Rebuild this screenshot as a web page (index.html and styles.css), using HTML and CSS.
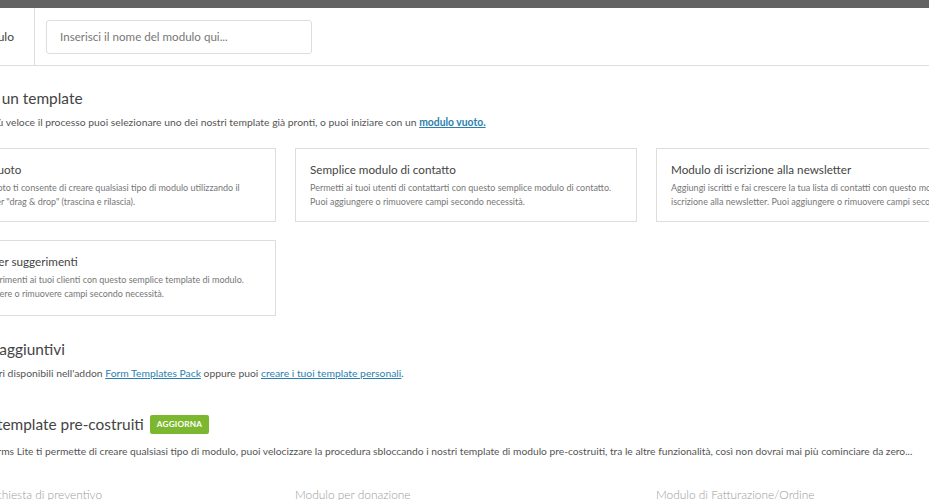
FILE: index.html
```html
<!DOCTYPE html>
<html lang="it">
<head>
<meta charset="utf-8">
<title>Setup modulo</title>
<link rel="stylesheet" href="styles.css">
</head>
<body>
<div class="topbar"></div>
<header class="header">
  <div class="header-label">Nome del modulo</div>
  <div class="header-field">
    <input class="name-input" type="text" placeholder="Inserisci il nome del modulo qui...">
  </div>
</header>
<main class="content">
  <section class="section">
    <h2 class="section-title">Seleziona un template</h2>
    <p class="section-desc">Per rendere più veloce il processo puoi selezionare uno dei nostri template già pronti, o puoi iniziare con un <a class="link-strong" href="#">modulo vuoto.</a></p>
    <div class="grid">
      <div class="card">
        <div class="card-title">Modulo vuoto</div>
        <div class="card-desc">Il modulo vuoto ti consente di creare qualsiasi tipo di modulo utilizzando il<br>nostro builder "drag &amp; drop" (trascina e rilascia).</div>
      </div>
      <div class="card">
        <div class="card-title">Semplice modulo di contatto</div>
        <div class="card-desc">Permetti ai tuoi utenti di contattarti con questo semplice modulo di contatto.<br>Puoi aggiungere o rimuovere campi secondo necessità.</div>
      </div>
      <div class="card">
        <div class="card-title">Modulo di iscrizione alla newsletter</div>
        <div class="card-desc">Aggiungi iscritti e fai crescere la tua lista di contatti con questo modulo di<br>iscrizione alla newsletter. Puoi aggiungere o rimuovere campi secondo necessità.</div>
      </div>
      <div class="card card-tall">
        <div class="card-title">Modulo per suggerimenti</div>
        <div class="card-desc">Chiedi suggerimenti ai tuoi clienti con questo semplice template di modulo.<br>Puoi aggiungere o rimuovere campi secondo necessità.</div>
      </div>
    </div>
  </section>

  <section class="section section-extra">
    <h2 class="section-title">Template aggiuntivi</h2>
    <p class="section-desc">Ne troverai altri disponibili nell'addon <a class="link" href="#">Form Templates Pack</a> oppure puoi <a class="link" href="#">creare i tuoi template personali</a>.</p>
  </section>

  <section class="section section-pro">
    <h2 class="section-title title-badge">Sblocca i template pre-costruiti <span class="badge">AGGIORNA</span></h2>
    <p class="section-desc desc-pro">Mentre WPForms Lite ti permette di creare qualsiasi tipo di modulo, puoi velocizzare la procedura sbloccando i nostri template di modulo pre-costruiti, tra le altre funzionalità, così non dovrai mai più cominciare da zero...</p>
    <div class="grid pro-grid">
      <div class="pro-item">Modulo di richiesta di preventivo</div>
      <div class="pro-item">Modulo per donazione</div>
      <div class="pro-item">Modulo di Fatturazione/Ordine</div>
    </div>
  </section>
</main>
</body>
</html>
```

FILE: styles.css
```css
html, body {
  margin: 0;
  padding: 0;
  background: #ffffff;
  overflow: hidden;
}

body {
  font-family: Lato, "Open Sans", sans-serif;
  color: #444444;
  width: 929px;
  height: 500px;
}

.topbar {
  height: 8px;
  background: #636363;
}

.header {
  display: flex;
  align-items: stretch;
  height: 57px;
  border-bottom: 1px solid #dddddd;
  margin-left: -120px;
}

.header-label {
  width: 134px;
  padding-right: 20px;
  display: flex;
  align-items: center;
  justify-content: flex-end;
  border-right: 1px solid #dddddd;
  font-size: 12px;
  color: #444444;
}

.header-field {
  display: flex;
  align-items: center;
  padding-left: 11px;
}

.name-input {
  box-sizing: border-box;
  width: 266px;
  height: 34px;
  border: 1px solid #dddddd;
  border-radius: 3px;
  padding: 0 13px;
  font-family: Lato, "Open Sans", sans-serif;
  font-size: 11.6px;
  color: #444444;
  outline: none;
}

.name-input::placeholder {
  color: #777777;
}

.content {
  margin-left: -66px;
  padding-top: 22px;
}

.section-title {
  margin: 0;
  font-size: 15.4px;
  line-height: 20px;
  font-weight: 400;
  color: #444444;
  display: flex;
  align-items: center;
  gap: 6px;
  white-space: nowrap;
}

.section-desc {
  margin: 6px 0 0;
  font-size: 10.35px;
  line-height: 16px;
  color: #555555;
  white-space: nowrap;
}

.desc-pro {
  margin-top: 9px;
  font-size: 10.25px;
}

.link-strong {
  color: #2a7fb0;
  font-weight: 700;
  text-decoration: underline;
}

.link {
  color: #2a7fb0;
  text-decoration: underline;
}

.grid {
  display: grid;
  grid-template-columns: repeat(3, 342px);
  column-gap: 19px;
  row-gap: 18px;
  margin-top: 18px;
}

.card {
  box-sizing: border-box;
  border: 1px solid #dddddd;
  background: #ffffff;
  padding: 12px 14px 11px;
  min-height: 74px;
}

.card-tall {
  min-height: 76px;
}

.card-title {
  font-size: 11.7px;
  line-height: 16px;
  color: #444444;
  white-space: nowrap;
}

.card-desc {
  margin-top: 4px;
  font-size: 9px;
  line-height: 14px;
  color: #777777;
  white-space: nowrap;
}

.section-extra {
  margin-top: 23px;
}

.section-pro {
  margin-top: 33px;
}

.badge {
  display: inline-block;
  background: #7cb82f;
  color: #ffffff;
  font-size: 8.2px;
  font-weight: 700;
  line-height: 19px;
  height: 19px;
  padding: 0 7px;
  border-radius: 2px;
  letter-spacing: 0.2px;
}

.pro-grid {
  margin-top: 28px;
}

.pro-item {
  font-size: 11.9px;
  line-height: 16px;
  color: #9a9a9a;
  font-weight: 300;
  white-space: nowrap;
}
```
